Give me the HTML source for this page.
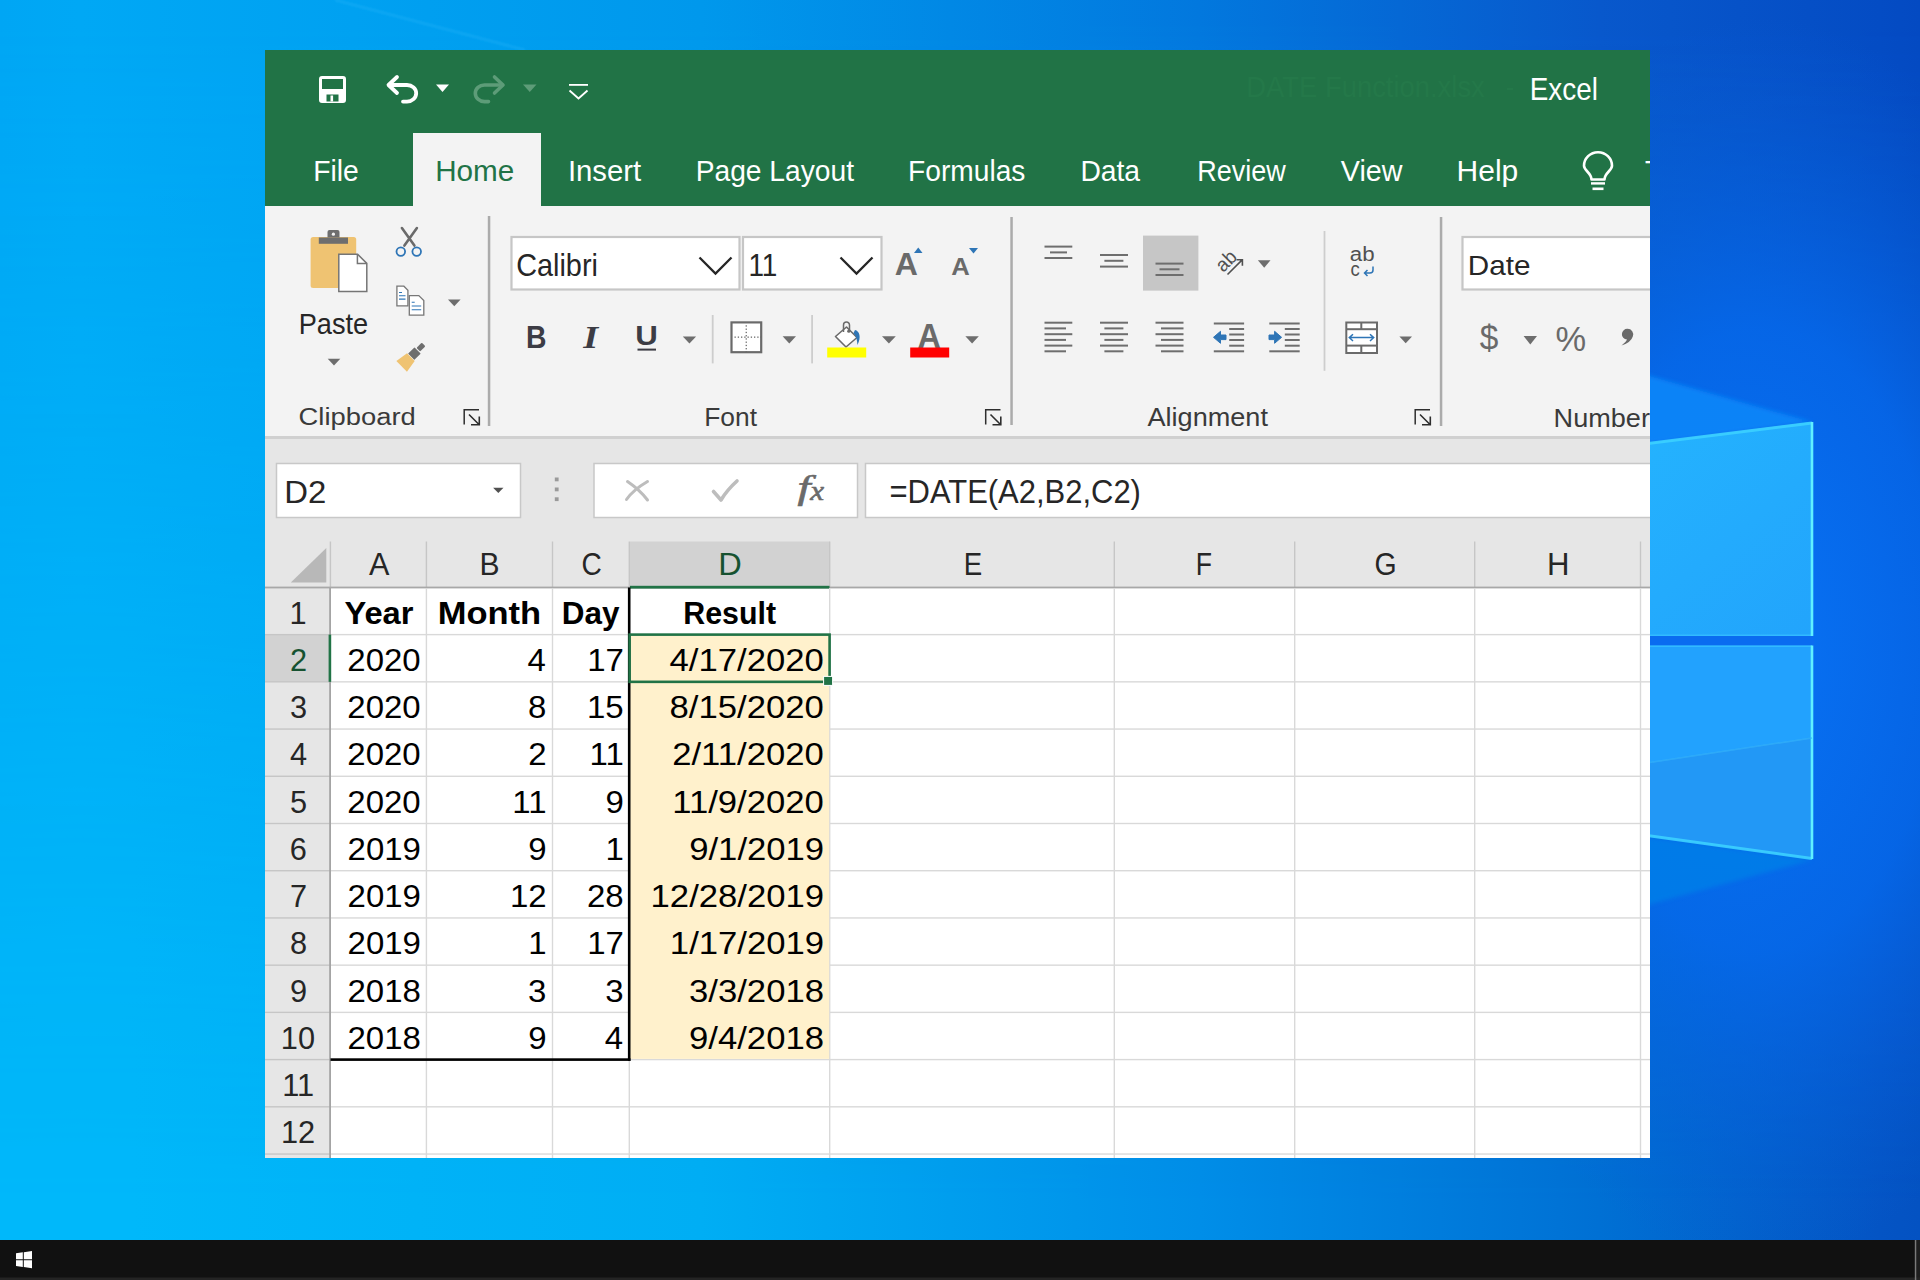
<!DOCTYPE html>
<html><head><meta charset="utf-8"><title>Excel DATE</title>
<style>
html,body{margin:0;padding:0;width:1920px;height:1280px;overflow:hidden;}
body{position:relative;font-family:"Liberation Sans", sans-serif;
 background:
  linear-gradient(100deg, #00a2ec 0%, #00a6f0 30%, #0096ea 50%, #0a78dc 68%, #0a5ed0 82%, #0a4cc0 100%);
}
#wall{position:absolute;left:0;top:0;width:1920px;height:1280px;}
#win{position:absolute;left:265px;top:50px;width:1385px;height:1108px;overflow:hidden;background:#fff;}
#taskbar{position:absolute;left:0;top:1240px;width:1920px;height:40px;background:#111111;}
svg{position:absolute;left:0;top:0;}
</style></head>
<body>
<svg id="wall" width="1920" height="1280" viewBox="0 0 1920 1280"><defs>
<linearGradient id="gBot" x1="0" y1="0" x2="1920" y2="0" gradientUnits="userSpaceOnUse">
 <stop offset="0" stop-color="#00b8fa"/><stop offset="0.068" stop-color="#00b8fa"/><stop offset="0.365" stop-color="#00aef4"/>
 <stop offset="0.625" stop-color="#008ee8"/><stop offset="0.833" stop-color="#0070d4"/><stop offset="0.979" stop-color="#0454c4"/><stop offset="1" stop-color="#0452c2"/>
</linearGradient>
<linearGradient id="gTop" x1="0" y1="0" x2="1920" y2="0" gradientUnits="userSpaceOnUse">
 <stop offset="0" stop-color="#00a6f4"/><stop offset="0.042" stop-color="#00a8f5"/><stop offset="0.365" stop-color="#0098ec"/>
 <stop offset="0.625" stop-color="#0278de"/><stop offset="0.833" stop-color="#0858cc"/><stop offset="0.979" stop-color="#044cc4"/><stop offset="1" stop-color="#044ac2"/>
</linearGradient>
<linearGradient id="fadeV" x1="0" y1="25" x2="0" y2="1200" gradientUnits="userSpaceOnUse">
 <stop offset="0" stop-color="#fff" stop-opacity="1"/><stop offset="1" stop-color="#fff" stop-opacity="0"/>
</linearGradient>
<mask id="mTop"><rect x="0" y="0" width="1920" height="1280" fill="url(#fadeV)"/></mask>
<radialGradient id="glow" cx="1760" cy="640" r="480" gradientUnits="userSpaceOnUse" gradientTransform="translate(1760 640) scale(0.75 1.3) translate(-1760 -640)">
 <stop offset="0" stop-color="#0872f4" stop-opacity="1"/><stop offset="0.5" stop-color="#066aee" stop-opacity="0.8"/><stop offset="1" stop-color="#0a60d8" stop-opacity="0"/>
</radialGradient>
<linearGradient id="paneT" x1="1650" y1="440" x2="1812" y2="635" gradientUnits="userSpaceOnUse">
 <stop offset="0" stop-color="#24b2fe"/><stop offset="1" stop-color="#22a4fc"/>
</linearGradient>
<linearGradient id="beamT" x1="1650" y1="0" x2="1812" y2="0" gradientUnits="userSpaceOnUse">
 <stop offset="0" stop-color="#1c86ec"/><stop offset="1" stop-color="#1a7ae8"/>
</linearGradient>
<filter id="blur1" x="-10%" y="-10%" width="120%" height="120%"><feGaussianBlur stdDeviation="1.2"/></filter>
<filter id="blur2" x="-10%" y="-30%" width="120%" height="160%"><feGaussianBlur stdDeviation="2.2"/></filter>
<filter id="blur3" x="-20%" y="-20%" width="140%" height="140%"><feGaussianBlur stdDeviation="3"/></filter>
</defs><rect x="0" y="0" width="1920" height="1280" fill="url(#gBot)"/><rect x="0" y="0" width="1920" height="1280" fill="url(#gTop)" mask="url(#mTop)"/><rect x="1300" y="0" width="620" height="1280" fill="url(#glow)"/><path d="M335,0 L525,50" stroke="#40c4ff" stroke-opacity="0.22" stroke-width="2.5" filter="url(#blur1)"/><polygon points="1812,422 1640,373 1640,445" fill="#0888fa" opacity="0.85" filter="url(#blur2)"/><polygon points="1812,860 1640,836 1640,907" fill="#067ee8" opacity="0.85" filter="url(#blur2)"/><rect x="1640" y="634" width="174" height="13" fill="#0a6cf0"/><polygon points="1640,444 1812,422 1812,636 1640,636" fill="url(#paneT)"/><polygon points="1640,645.5 1812,645.5 1812,738 1640,764" fill="#22a2fe"/><polygon points="1640,764 1812,738 1812,859 1640,835" fill="#2298f6"/><polyline points="1812,422 1812,636" fill="none" stroke="#6ae4ff" stroke-width="5" opacity="0.45" filter="url(#blur3)"/><polyline points="1812,645.5 1812,859" fill="none" stroke="#6ae4ff" stroke-width="5" opacity="0.45" filter="url(#blur3)"/><polyline points="1640,444.5 1812,423" fill="none" stroke="#3cd0ff" stroke-width="3" opacity="0.9"/><polyline points="1640,834.5 1812,858.5" fill="none" stroke="#3cd0ff" stroke-width="3" opacity="0.9"/><polyline points="1640,635.2 1812,635.2" fill="none" stroke="#34bcff" stroke-width="1.6" opacity="0.9"/><polyline points="1640,646.3 1812,646.3" fill="none" stroke="#34bcff" stroke-width="1.6" opacity="0.9"/><polyline points="1812,422 1812,636" fill="none" stroke="#60f0ff" stroke-width="2.6"/><polyline points="1812,645.5 1812,859" fill="none" stroke="#60f0ff" stroke-width="2.6"/><polyline points="1640,764 1812,738" fill="none" stroke="#36b4fa" stroke-width="1.5" opacity="0.7"/></svg>
<svg width="1920" height="1280" viewBox="0 0 1920 1280" style="position:absolute;left:0;top:0"><defs><clipPath id="wclip"><rect x="265" y="50" width="1385" height="1108"/></clipPath></defs><g clip-path="url(#wclip)"><rect x="265" y="50" width="1385" height="1108" fill="#e6e6e6"/><rect x="265" y="50" width="1385" height="156.5" fill="#217346"/><rect x="413" y="133" width="128" height="74" fill="#f3f3f3"/><rect x="265" y="206" width="1385" height="231" fill="#f3f3f3"/><rect x="265" y="436" width="1385" height="3" fill="#d0d0d0"/><rect x="330" y="587" width="1320" height="571" fill="#ffffff"/><rect x="265" y="588" width="65" height="570" fill="#e6e6e6"/></g><text x="1246.35" y="97.00" font-size="29.07" font-weight="normal" font-family='"Liberation Sans", sans-serif' fill="#247849" textLength="238.45" lengthAdjust="spacingAndGlyphs" >DATE Function.xlsx</text><rect x="1507" y="88" width="6" height="2" fill="#247849"/><text x="1529.71" y="100.00" font-size="31.11" font-weight="normal" font-family='"Liberation Sans", sans-serif' fill="#ffffff" textLength="68.16" lengthAdjust="spacingAndGlyphs" >Excel</text><text x="313.18" y="181.00" font-size="30.09" font-weight="normal" font-family='"Liberation Sans", sans-serif' fill="#ffffff" textLength="45.57" lengthAdjust="spacingAndGlyphs" >File</text><text x="435.17" y="181.00" font-size="30.09" font-weight="normal" font-family='"Liberation Sans", sans-serif' fill="#217346" textLength="79.15" lengthAdjust="spacingAndGlyphs" >Home</text><text x="567.90" y="181.00" font-size="30.09" font-weight="normal" font-family='"Liberation Sans", sans-serif' fill="#ffffff" textLength="73.30" lengthAdjust="spacingAndGlyphs" >Insert</text><text x="695.69" y="181.00" font-size="30.09" font-weight="normal" font-family='"Liberation Sans", sans-serif' fill="#ffffff" textLength="158.30" lengthAdjust="spacingAndGlyphs" >Page Layout</text><text x="908.09" y="181.00" font-size="30.09" font-weight="normal" font-family='"Liberation Sans", sans-serif' fill="#ffffff" textLength="117.31" lengthAdjust="spacingAndGlyphs" >Formulas</text><text x="1080.39" y="181.00" font-size="30.09" font-weight="normal" font-family='"Liberation Sans", sans-serif' fill="#ffffff" textLength="59.62" lengthAdjust="spacingAndGlyphs" >Data</text><text x="1197.19" y="181.00" font-size="30.09" font-weight="normal" font-family='"Liberation Sans", sans-serif' fill="#ffffff" textLength="88.56" lengthAdjust="spacingAndGlyphs" >Review</text><text x="1340.86" y="181.00" font-size="30.09" font-weight="normal" font-family='"Liberation Sans", sans-serif' fill="#ffffff" textLength="61.60" lengthAdjust="spacingAndGlyphs" >View</text><text x="1456.54" y="181.00" font-size="30.09" font-weight="normal" font-family='"Liberation Sans", sans-serif' fill="#ffffff" textLength="61.71" lengthAdjust="spacingAndGlyphs" >Help</text><g clip-path="url(#wclip)"><text x="1644.90" y="181.00" font-size="30.09" font-weight="normal" font-family='"Liberation Sans", sans-serif' fill="#ffffff" textLength="85.77" lengthAdjust="spacingAndGlyphs" >Tell me</text></g><text x="298.77" y="333.50" font-size="29.80" font-weight="normal" font-family='"Liberation Sans", sans-serif' fill="#262626" textLength="69.42" lengthAdjust="spacingAndGlyphs" >Paste</text><text x="298.60" y="425.00" font-size="24.42" font-weight="normal" font-family='"Liberation Sans", sans-serif' fill="#3a3a3a" textLength="117.16" lengthAdjust="spacingAndGlyphs" >Clipboard</text><text x="704.24" y="426.30" font-size="25.29" font-weight="normal" font-family='"Liberation Sans", sans-serif' fill="#3a3a3a" textLength="52.75" lengthAdjust="spacingAndGlyphs" >Font</text><text x="1147.45" y="425.80" font-size="25.00" font-weight="normal" font-family='"Liberation Sans", sans-serif' fill="#3a3a3a" textLength="120.54" lengthAdjust="spacingAndGlyphs" >Alignment</text><g clip-path="url(#wclip)"><text x="1553.58" y="426.50" font-size="25.29" font-weight="normal" font-family='"Liberation Sans", sans-serif' fill="#3a3a3a" textLength="96.37" lengthAdjust="spacingAndGlyphs" >Number</text></g><rect x="511.5" y="237" width="228" height="52.5" fill="#ffffff" stroke="#c6c6c6" stroke-width="2.2"/><rect x="743" y="237" width="138.5" height="52.5" fill="#ffffff" stroke="#c6c6c6" stroke-width="2.2"/><text x="516.13" y="276.00" font-size="31.54" font-weight="normal" font-family='"Liberation Sans", sans-serif' fill="#262626" textLength="81.81" lengthAdjust="spacingAndGlyphs" >Calibri</text><text x="748.38" y="276.00" font-size="31.54" font-weight="normal" font-family='"Liberation Sans", sans-serif' fill="#262626" textLength="28.99" lengthAdjust="spacingAndGlyphs" >11</text><polyline points="699.5,257.5 715.5,273.5 731.5,257.5" fill="none" stroke="#262626" stroke-width="2.3"/><polyline points="840.5,257.5 856.5,273.5 872.5,257.5" fill="none" stroke="#262626" stroke-width="2.3"/><g clip-path="url(#wclip)"><rect x="1462.5" y="237" width="250" height="52.5" fill="#ffffff" stroke="#c6c6c6" stroke-width="2.2"/></g><text x="1467.87" y="275.40" font-size="28.49" font-weight="normal" font-family='"Liberation Sans", sans-serif' fill="#262626" textLength="62.65" lengthAdjust="spacingAndGlyphs" >Date</text><rect x="487.8" y="216" width="2.5" height="210" fill="#ababab"/><rect x="1010.3" y="217" width="2.5" height="208" fill="#ababab"/><rect x="1439.8" y="217" width="2.5" height="209" fill="#ababab"/><rect x="711.8000000000001" y="315" width="1.8" height="48.39999999999998" fill="#cdcdcd"/><rect x="811.2" y="315" width="1.8" height="48.39999999999998" fill="#cdcdcd"/><rect x="1323.6000000000001" y="231" width="1.8" height="139.8" fill="#cdcdcd"/><rect x="276.5" y="463.5" width="244" height="54" fill="#ffffff" stroke="#c8c8c8" stroke-width="1.5"/><rect x="594" y="463.5" width="263.5" height="54" fill="#ffffff" stroke="#c8c8c8" stroke-width="1.5"/><g clip-path="url(#wclip)"><rect x="865.5" y="463.5" width="800" height="54" fill="#ffffff" stroke="#c8c8c8" stroke-width="1.5"/></g><text x="284.30" y="502.70" font-size="30.52" font-weight="normal" font-family='"Liberation Sans", sans-serif' fill="#262626" textLength="42.05" lengthAdjust="spacingAndGlyphs" >D2</text><text x="889.48" y="502.50" font-size="32.85" font-weight="normal" font-family='"Liberation Sans", sans-serif' fill="#262626" textLength="251.44" lengthAdjust="spacingAndGlyphs" >=DATE(A2,B2,C2)</text><rect x="630" y="541.5" width="199.5" height="46" fill="#d2d2d2"/><rect x="329.7" y="541.5" width="1.4" height="46" fill="#c6c6c6"/><rect x="425.7" y="541.5" width="1.4" height="46" fill="#c6c6c6"/><rect x="551.8" y="541.5" width="1.4" height="46" fill="#c6c6c6"/><rect x="628.6" y="541.5" width="1.4" height="46" fill="#c6c6c6"/><rect x="829.0" y="541.5" width="1.4" height="46" fill="#c6c6c6"/><rect x="1113.6000000000001" y="541.5" width="1.4" height="46" fill="#c6c6c6"/><rect x="1294.0" y="541.5" width="1.4" height="46" fill="#c6c6c6"/><rect x="1474.0" y="541.5" width="1.4" height="46" fill="#c6c6c6"/><rect x="1639.8000000000002" y="541.5" width="1.4" height="46" fill="#c6c6c6"/><polygon points="326.3,548 326.3,582.4 290.8,582.4" fill="#b8b8b8"/><rect x="265" y="586.6" width="1385" height="1.8" fill="#a8a8a8"/><rect x="630" y="585.8" width="199.5" height="2.8" fill="#217346"/><text x="368.94" y="575.30" font-size="30.52" font-weight="normal" font-family='"Liberation Sans", sans-serif' fill="#262626" textLength="20.42" lengthAdjust="spacingAndGlyphs" >A</text><text x="479.53" y="575.30" font-size="30.52" font-weight="normal" font-family='"Liberation Sans", sans-serif' fill="#262626" textLength="20.06" lengthAdjust="spacingAndGlyphs" >B</text><text x="581.57" y="575.30" font-size="30.52" font-weight="normal" font-family='"Liberation Sans", sans-serif' fill="#262626" textLength="20.31" lengthAdjust="spacingAndGlyphs" >C</text><text x="718.33" y="575.30" font-size="30.52" font-weight="normal" font-family='"Liberation Sans", sans-serif' fill="#165230" textLength="23.54" lengthAdjust="spacingAndGlyphs" >D</text><text x="963.73" y="575.30" font-size="30.52" font-weight="normal" font-family='"Liberation Sans", sans-serif' fill="#262626" textLength="18.46" lengthAdjust="spacingAndGlyphs" >E</text><text x="1195.82" y="575.30" font-size="30.52" font-weight="normal" font-family='"Liberation Sans", sans-serif' fill="#262626" textLength="16.24" lengthAdjust="spacingAndGlyphs" >F</text><text x="1374.58" y="575.30" font-size="30.52" font-weight="normal" font-family='"Liberation Sans", sans-serif' fill="#262626" textLength="22.16" lengthAdjust="spacingAndGlyphs" >G</text><text x="1547.05" y="575.30" font-size="30.52" font-weight="normal" font-family='"Liberation Sans", sans-serif' fill="#262626" textLength="22.48" lengthAdjust="spacingAndGlyphs" >H</text><g clip-path="url(#wclip)"><rect x="265" y="634.62" width="65" height="47.22" fill="#d2d2d2"/><rect x="330" y="633.92" width="1320" height="1.4" fill="#d9d9d9"/><rect x="265" y="633.92" width="65" height="1.4" fill="#c6c6c6"/><rect x="330" y="681.14" width="1320" height="1.4" fill="#d9d9d9"/><rect x="265" y="681.14" width="65" height="1.4" fill="#c6c6c6"/><rect x="330" y="728.36" width="1320" height="1.4" fill="#d9d9d9"/><rect x="265" y="728.36" width="65" height="1.4" fill="#c6c6c6"/><rect x="330" y="775.58" width="1320" height="1.4" fill="#d9d9d9"/><rect x="265" y="775.58" width="65" height="1.4" fill="#c6c6c6"/><rect x="330" y="822.80" width="1320" height="1.4" fill="#d9d9d9"/><rect x="265" y="822.80" width="65" height="1.4" fill="#c6c6c6"/><rect x="330" y="870.02" width="1320" height="1.4" fill="#d9d9d9"/><rect x="265" y="870.02" width="65" height="1.4" fill="#c6c6c6"/><rect x="330" y="917.24" width="1320" height="1.4" fill="#d9d9d9"/><rect x="265" y="917.24" width="65" height="1.4" fill="#c6c6c6"/><rect x="330" y="964.46" width="1320" height="1.4" fill="#d9d9d9"/><rect x="265" y="964.46" width="65" height="1.4" fill="#c6c6c6"/><rect x="330" y="1011.68" width="1320" height="1.4" fill="#d9d9d9"/><rect x="265" y="1011.68" width="65" height="1.4" fill="#c6c6c6"/><rect x="330" y="1058.90" width="1320" height="1.4" fill="#d9d9d9"/><rect x="265" y="1058.90" width="65" height="1.4" fill="#c6c6c6"/><rect x="330" y="1106.12" width="1320" height="1.4" fill="#d9d9d9"/><rect x="265" y="1106.12" width="65" height="1.4" fill="#c6c6c6"/><rect x="330" y="1153.34" width="1320" height="1.4" fill="#d9d9d9"/><rect x="265" y="1153.34" width="65" height="1.4" fill="#c6c6c6"/><rect x="425.70" y="588" width="1.4" height="570" fill="#d9d9d9"/><rect x="551.80" y="588" width="1.4" height="570" fill="#d9d9d9"/><rect x="628.60" y="588" width="1.4" height="570" fill="#d9d9d9"/><rect x="829.00" y="588" width="1.4" height="570" fill="#d9d9d9"/><rect x="1113.60" y="588" width="1.4" height="570" fill="#d9d9d9"/><rect x="1294.00" y="588" width="1.4" height="570" fill="#d9d9d9"/><rect x="1474.00" y="588" width="1.4" height="570" fill="#d9d9d9"/><rect x="1639.80" y="588" width="1.4" height="570" fill="#d9d9d9"/><rect x="630" y="635.32" width="199.2" height="423.58" fill="#fff1cc"/><rect x="329.2" y="588" width="1.8" height="570" fill="#a4a4a4"/><rect x="328.6" y="634.62" width="2.6" height="47.22" fill="#217346"/></g><rect x="627.9" y="587.5" width="2.6" height="473.40" fill="#000"/><rect x="330.5" y="1058.30" width="300" height="2.6" fill="#000"/><rect x="629.6" y="634.62" width="200" height="47.22" fill="none" stroke="#217346" stroke-width="2.6"/><rect x="823.6" y="676.4" width="9" height="9" fill="#217346" stroke="#ffffff" stroke-width="1"/><text x="289.54" y="623.82" font-size="31.54" font-weight="normal" font-family='"Liberation Sans", sans-serif' fill="#262626" textLength="17.10" lengthAdjust="spacingAndGlyphs" >1</text><text x="289.95" y="671.04" font-size="31.54" font-weight="normal" font-family='"Liberation Sans", sans-serif' fill="#165230" textLength="17.10" lengthAdjust="spacingAndGlyphs" >2</text><text x="290.05" y="718.26" font-size="31.54" font-weight="normal" font-family='"Liberation Sans", sans-serif' fill="#262626" textLength="17.10" lengthAdjust="spacingAndGlyphs" >3</text><text x="290.05" y="765.48" font-size="31.54" font-weight="normal" font-family='"Liberation Sans", sans-serif' fill="#262626" textLength="17.10" lengthAdjust="spacingAndGlyphs" >4</text><text x="289.98" y="812.70" font-size="31.54" font-weight="normal" font-family='"Liberation Sans", sans-serif' fill="#262626" textLength="17.10" lengthAdjust="spacingAndGlyphs" >5</text><text x="289.85" y="859.92" font-size="31.54" font-weight="normal" font-family='"Liberation Sans", sans-serif' fill="#262626" textLength="17.10" lengthAdjust="spacingAndGlyphs" >6</text><text x="289.94" y="907.14" font-size="31.54" font-weight="normal" font-family='"Liberation Sans", sans-serif' fill="#262626" textLength="17.10" lengthAdjust="spacingAndGlyphs" >7</text><text x="289.95" y="954.36" font-size="31.54" font-weight="normal" font-family='"Liberation Sans", sans-serif' fill="#262626" textLength="17.10" lengthAdjust="spacingAndGlyphs" >8</text><text x="289.95" y="1001.58" font-size="31.54" font-weight="normal" font-family='"Liberation Sans", sans-serif' fill="#262626" textLength="17.10" lengthAdjust="spacingAndGlyphs" >9</text><text x="280.84" y="1048.80" font-size="31.54" font-weight="normal" font-family='"Liberation Sans", sans-serif' fill="#262626" textLength="34.19" lengthAdjust="spacingAndGlyphs" >10</text><text x="282.13" y="1096.02" font-size="31.54" font-weight="normal" font-family='"Liberation Sans", sans-serif' fill="#262626" textLength="31.91" lengthAdjust="spacingAndGlyphs" >11</text><text x="281.01" y="1143.24" font-size="31.54" font-weight="normal" font-family='"Liberation Sans", sans-serif' fill="#262626" textLength="34.19" lengthAdjust="spacingAndGlyphs" >12</text><text x="344.44" y="623.82" font-size="31.54" font-weight="bold" font-family='"Liberation Sans", sans-serif' fill="#000" textLength="69.06" lengthAdjust="spacingAndGlyphs" >Year</text><text x="437.69" y="623.82" font-size="31.54" font-weight="bold" font-family='"Liberation Sans", sans-serif' fill="#000" textLength="103.43" lengthAdjust="spacingAndGlyphs" >Month</text><text x="561.69" y="623.82" font-size="31.54" font-weight="bold" font-family='"Liberation Sans", sans-serif' fill="#000" textLength="57.68" lengthAdjust="spacingAndGlyphs" >Day</text><text x="683.27" y="623.82" font-size="31.54" font-weight="bold" font-family='"Liberation Sans", sans-serif' fill="#000" textLength="92.80" lengthAdjust="spacingAndGlyphs" >Result</text><text x="347.35" y="671.04" font-size="31.54" font-weight="normal" font-family='"Liberation Sans", sans-serif' fill="#000" textLength="73.36" lengthAdjust="spacingAndGlyphs" >2020</text><text x="527.62" y="671.04" font-size="31.54" font-weight="normal" font-family='"Liberation Sans", sans-serif' fill="#000" textLength="18.34" lengthAdjust="spacingAndGlyphs" >4</text><text x="587.18" y="671.04" font-size="31.54" font-weight="normal" font-family='"Liberation Sans", sans-serif' fill="#000" textLength="36.68" lengthAdjust="spacingAndGlyphs" >17</text><text x="669.60" y="671.04" font-size="31.54" font-weight="normal" font-family='"Liberation Sans", sans-serif' fill="#000" textLength="154.24" lengthAdjust="spacingAndGlyphs" >4/17/2020</text><text x="347.35" y="718.26" font-size="31.54" font-weight="normal" font-family='"Liberation Sans", sans-serif' fill="#000" textLength="73.36" lengthAdjust="spacingAndGlyphs" >2020</text><text x="528.08" y="718.26" font-size="31.54" font-weight="normal" font-family='"Liberation Sans", sans-serif' fill="#000" textLength="18.34" lengthAdjust="spacingAndGlyphs" >8</text><text x="586.92" y="718.26" font-size="31.54" font-weight="normal" font-family='"Liberation Sans", sans-serif' fill="#000" textLength="36.68" lengthAdjust="spacingAndGlyphs" >15</text><text x="669.60" y="718.26" font-size="31.54" font-weight="normal" font-family='"Liberation Sans", sans-serif' fill="#000" textLength="154.24" lengthAdjust="spacingAndGlyphs" >8/15/2020</text><text x="347.35" y="765.48" font-size="31.54" font-weight="normal" font-family='"Liberation Sans", sans-serif' fill="#000" textLength="73.36" lengthAdjust="spacingAndGlyphs" >2020</text><text x="528.32" y="765.48" font-size="31.54" font-weight="normal" font-family='"Liberation Sans", sans-serif' fill="#000" textLength="18.34" lengthAdjust="spacingAndGlyphs" >2</text><text x="589.59" y="765.48" font-size="31.54" font-weight="normal" font-family='"Liberation Sans", sans-serif' fill="#000" textLength="34.23" lengthAdjust="spacingAndGlyphs" >11</text><text x="672.20" y="765.48" font-size="31.54" font-weight="normal" font-family='"Liberation Sans", sans-serif' fill="#000" textLength="151.67" lengthAdjust="spacingAndGlyphs" >2/11/2020</text><text x="347.35" y="812.70" font-size="31.54" font-weight="normal" font-family='"Liberation Sans", sans-serif' fill="#000" textLength="73.36" lengthAdjust="spacingAndGlyphs" >2020</text><text x="512.39" y="812.70" font-size="31.54" font-weight="normal" font-family='"Liberation Sans", sans-serif' fill="#000" textLength="34.23" lengthAdjust="spacingAndGlyphs" >11</text><text x="605.42" y="812.70" font-size="31.54" font-weight="normal" font-family='"Liberation Sans", sans-serif' fill="#000" textLength="18.34" lengthAdjust="spacingAndGlyphs" >9</text><text x="672.20" y="812.70" font-size="31.54" font-weight="normal" font-family='"Liberation Sans", sans-serif' fill="#000" textLength="151.67" lengthAdjust="spacingAndGlyphs" >11/9/2020</text><text x="347.62" y="859.92" font-size="31.54" font-weight="normal" font-family='"Liberation Sans", sans-serif' fill="#000" textLength="73.36" lengthAdjust="spacingAndGlyphs" >2019</text><text x="528.22" y="859.92" font-size="31.54" font-weight="normal" font-family='"Liberation Sans", sans-serif' fill="#000" textLength="18.34" lengthAdjust="spacingAndGlyphs" >9</text><text x="605.48" y="859.92" font-size="31.54" font-weight="normal" font-family='"Liberation Sans", sans-serif' fill="#000" textLength="18.34" lengthAdjust="spacingAndGlyphs" >1</text><text x="689.19" y="859.92" font-size="31.54" font-weight="normal" font-family='"Liberation Sans", sans-serif' fill="#000" textLength="134.96" lengthAdjust="spacingAndGlyphs" >9/1/2019</text><text x="347.62" y="907.14" font-size="31.54" font-weight="normal" font-family='"Liberation Sans", sans-serif' fill="#000" textLength="73.36" lengthAdjust="spacingAndGlyphs" >2019</text><text x="509.98" y="907.14" font-size="31.54" font-weight="normal" font-family='"Liberation Sans", sans-serif' fill="#000" textLength="36.68" lengthAdjust="spacingAndGlyphs" >12</text><text x="586.95" y="907.14" font-size="31.54" font-weight="normal" font-family='"Liberation Sans", sans-serif' fill="#000" textLength="36.68" lengthAdjust="spacingAndGlyphs" >28</text><text x="650.60" y="907.14" font-size="31.54" font-weight="normal" font-family='"Liberation Sans", sans-serif' fill="#000" textLength="173.52" lengthAdjust="spacingAndGlyphs" >12/28/2019</text><text x="347.62" y="954.36" font-size="31.54" font-weight="normal" font-family='"Liberation Sans", sans-serif' fill="#000" textLength="73.36" lengthAdjust="spacingAndGlyphs" >2019</text><text x="528.28" y="954.36" font-size="31.54" font-weight="normal" font-family='"Liberation Sans", sans-serif' fill="#000" textLength="18.34" lengthAdjust="spacingAndGlyphs" >1</text><text x="587.18" y="954.36" font-size="31.54" font-weight="normal" font-family='"Liberation Sans", sans-serif' fill="#000" textLength="36.68" lengthAdjust="spacingAndGlyphs" >17</text><text x="669.88" y="954.36" font-size="31.54" font-weight="normal" font-family='"Liberation Sans", sans-serif' fill="#000" textLength="154.24" lengthAdjust="spacingAndGlyphs" >1/17/2019</text><text x="347.48" y="1001.58" font-size="31.54" font-weight="normal" font-family='"Liberation Sans", sans-serif' fill="#000" textLength="73.36" lengthAdjust="spacingAndGlyphs" >2018</text><text x="528.12" y="1001.58" font-size="31.54" font-weight="normal" font-family='"Liberation Sans", sans-serif' fill="#000" textLength="18.34" lengthAdjust="spacingAndGlyphs" >3</text><text x="605.32" y="1001.58" font-size="31.54" font-weight="normal" font-family='"Liberation Sans", sans-serif' fill="#000" textLength="18.34" lengthAdjust="spacingAndGlyphs" >3</text><text x="689.05" y="1001.58" font-size="31.54" font-weight="normal" font-family='"Liberation Sans", sans-serif' fill="#000" textLength="134.96" lengthAdjust="spacingAndGlyphs" >3/3/2018</text><text x="347.48" y="1048.80" font-size="31.54" font-weight="normal" font-family='"Liberation Sans", sans-serif' fill="#000" textLength="73.36" lengthAdjust="spacingAndGlyphs" >2018</text><text x="528.22" y="1048.80" font-size="31.54" font-weight="normal" font-family='"Liberation Sans", sans-serif' fill="#000" textLength="18.34" lengthAdjust="spacingAndGlyphs" >9</text><text x="604.82" y="1048.80" font-size="31.54" font-weight="normal" font-family='"Liberation Sans", sans-serif' fill="#000" textLength="18.34" lengthAdjust="spacingAndGlyphs" >4</text><text x="689.05" y="1048.80" font-size="31.54" font-weight="normal" font-family='"Liberation Sans", sans-serif' fill="#000" textLength="134.96" lengthAdjust="spacingAndGlyphs" >9/4/2018</text><path d="M319.5,77.5 h22.5 l4,4 v21 h-26.5 z" fill="none" stroke="#fff" stroke-width="0"/><rect x="320.5" y="77.5" width="24" height="24" rx="1.5" fill="none" stroke="#fff" stroke-width="3"/><rect x="320" y="89" width="25" height="13" fill="#fff"/><rect x="326.5" y="94.5" width="12" height="7" fill="#217346"/><rect x="330.5" y="95.5" width="2.6" height="6" fill="#fff"/><path d="M389.5,85 H407 A9.2,8.3 0 0 1 407,101.6 H403" fill="none" stroke="#fff" stroke-width="3.8" stroke-linecap="round"/><polyline points="397,77 388.5,85 397,93" fill="none" stroke="#fff" stroke-width="3.8" stroke-linecap="round" stroke-linejoin="round"/><polygon points="436,84.5 449,84.5 442.5,92" fill="#ffffff"/><path d="M502,85 H484.5 A9.2,8.3 0 0 0 484.5,101.6 H488.5" fill="none" stroke="#5d9c78" stroke-width="3.6" stroke-linecap="round"/><polyline points="494.5,77 503,85 494.5,93" fill="none" stroke="#5d9c78" stroke-width="3.6" stroke-linecap="round" stroke-linejoin="round"/><polygon points="523,84.5 536.5,84.5 529.75,92" fill="#5d9c78"/><rect x="569" y="84" width="19" height="1.8" fill="#fff"/><polyline points="569.5,90.5 578.5,98.5 587.5,90.5" fill="none" stroke="#fff" stroke-width="1.8"/><path d="M1591.5,179.5 C1591.5,173 1584,170.5 1584,165.8 A14,13.6 0 0 1 1612,165.8 C1612,170.5 1604.5,173 1604.5,179.5 Z" fill="none" stroke="#fff" stroke-width="2.6" stroke-linejoin="round"/><rect x="1591" y="182.2" width="14" height="2.4" fill="#fff"/><rect x="1592.5" y="187.5" width="11" height="2.6" fill="#fff"/><rect x="310.6" y="237" width="45.6" height="51" rx="2.5" fill="#efc372"/><path d="M318.8,237.5 h29.2 v6.3 h-29.2 z" fill="#6e6e6e"/><path d="M327.5,237.6 v-5.6 a2,2 0 0 1 2,-2 h8 a2,2 0 0 1 2,2 v5.6 z" fill="#6e6e6e"/><circle cx="333.4" cy="234.2" r="1.6" fill="#f3f3f3"/><path d="M338.8,254.2 h18.8 l9.2,9.2 v28.2 h-28 z" fill="#fff" stroke="#757575" stroke-width="1.5"/><path d="M357.4,254.2 v9.4 h9.4" fill="none" stroke="#757575" stroke-width="1.5"/><polygon points="327.7,358.8 340.3,358.8 334.0,365.6" fill="#6d6d6d"/><path d="M401.9,228 L414.4,245.6 M416.9,228 L404.4,245.6" stroke="#6a6a6a" stroke-width="2.6" stroke-linecap="round"/><circle cx="400.8" cy="251.6" r="4.3" fill="none" stroke="#2e75b6" stroke-width="1.8"/><circle cx="416.7" cy="251.6" r="4.3" fill="none" stroke="#2e75b6" stroke-width="1.8"/><path d="M396.9,286.2 h7 l4,4 v15.6 h-11 z" fill="#fff" stroke="#777" stroke-width="1.3"/><path d="M399,292.5 h3 M399,295.8 h6.5 M399,299.1 h6.5" stroke="#2e75b6" stroke-width="1.1"/><path d="M409.3,295.6 h9.5 l5,5 v14.6 h-14.5 z" fill="#fff" stroke="#777" stroke-width="1.3"/><path d="M411.7,302.3 h3 M411.7,306 h9.5 M411.7,309.8 h9.5" stroke="#2e75b6" stroke-width="1.1"/><polygon points="448,299.5 460.6,299.5 454.3,306.2" fill="#6d6d6d"/><g transform="translate(410.5,357.5) rotate(-45)"><rect x="11" y="-2.6" width="7.5" height="5.2" rx="1" fill="#6e6e6e"/><rect x="1" y="-4.4" width="9" height="8.8" rx="0.5" fill="#6e6e6e"/><path d="M0.5,-5.4 L0.5,5.4 L-12.5,7.5 L-12.5,-7.5 Z" fill="#efc372"/></g><path d="M464.2,424.5 V409.7 H479.0" fill="none" stroke="#2e2e2e" stroke-width="1.5"/><path d="M469.0,414.5 L479.0,424.5 M479.3,416.5 V424.8 H471.0" fill="none" stroke="#2e2e2e" stroke-width="1.6"/><path d="M985.7,424.5 V409.7 H1000.5" fill="none" stroke="#2e2e2e" stroke-width="1.5"/><path d="M990.5,414.5 L1000.5,424.5 M1000.8,416.5 V424.8 H992.5" fill="none" stroke="#2e2e2e" stroke-width="1.6"/><path d="M1415.2,424.5 V409.7 H1430.0" fill="none" stroke="#2e2e2e" stroke-width="1.5"/><path d="M1420.0,414.5 L1430.0,424.5 M1430.3,416.5 V424.8 H1422.0" fill="none" stroke="#2e2e2e" stroke-width="1.6"/><text x="894.70" y="275.00" font-size="31.98" font-weight="bold" font-family='"Liberation Sans", sans-serif' fill="#6a6a6a" textLength="23.14" lengthAdjust="spacingAndGlyphs" >A</text><polygon points="914,253 922.5,253 918.25,247.5" fill="#2e75b6"/><text x="951.16" y="275.00" font-size="24.71" font-weight="bold" font-family='"Liberation Sans", sans-serif' fill="#6a6a6a" textLength="18.51" lengthAdjust="spacingAndGlyphs" >A</text><polygon points="969,248 978,248 973.5,253.5" fill="#2e75b6"/><text x="525.90" y="347.70" font-size="32.27" font-weight="bold" font-family='"Liberation Sans", sans-serif' fill="#3c3c44" textLength="20.48" lengthAdjust="spacingAndGlyphs" >B</text><text x="583.18" y="347.70" font-size="32.27" font-weight="bold" font-style="italic" font-family='"Liberation Serif", serif' fill="#3c3c44" textLength="14.86" lengthAdjust="spacingAndGlyphs" >I</text><text x="635.32" y="344.50" font-size="27.62" font-weight="bold" font-family='"Liberation Sans", sans-serif' fill="#3c3c44" textLength="22.59" lengthAdjust="spacingAndGlyphs" >U</text><rect x="637.5" y="348.6" width="18.5" height="2" fill="#3c3c44"/><polygon points="682.8,336.4 696.1,336.4 689.45,343.6" fill="#6d6d6d"/><rect x="731.5" y="322.4" width="29.7" height="29.8" fill="#fff" stroke="#6a6a6a" stroke-width="2.2"/><rect x="734.50" y="336.5" width="1.3" height="1.3" fill="#6a6a6a"/><rect x="745.6" y="325.30" width="1.3" height="1.3" fill="#6a6a6a"/><rect x="737.75" y="336.5" width="1.3" height="1.3" fill="#6a6a6a"/><rect x="745.6" y="328.55" width="1.3" height="1.3" fill="#6a6a6a"/><rect x="741.00" y="336.5" width="1.3" height="1.3" fill="#6a6a6a"/><rect x="745.6" y="331.80" width="1.3" height="1.3" fill="#6a6a6a"/><rect x="744.25" y="336.5" width="1.3" height="1.3" fill="#6a6a6a"/><rect x="745.6" y="335.05" width="1.3" height="1.3" fill="#6a6a6a"/><rect x="747.50" y="336.5" width="1.3" height="1.3" fill="#6a6a6a"/><rect x="745.6" y="338.30" width="1.3" height="1.3" fill="#6a6a6a"/><rect x="750.75" y="336.5" width="1.3" height="1.3" fill="#6a6a6a"/><rect x="745.6" y="341.55" width="1.3" height="1.3" fill="#6a6a6a"/><rect x="754.00" y="336.5" width="1.3" height="1.3" fill="#6a6a6a"/><rect x="745.6" y="344.80" width="1.3" height="1.3" fill="#6a6a6a"/><rect x="757.25" y="336.5" width="1.3" height="1.3" fill="#6a6a6a"/><rect x="745.6" y="348.05" width="1.3" height="1.3" fill="#6a6a6a"/><rect x="760.50" y="336.5" width="1.3" height="1.3" fill="#6a6a6a"/><rect x="745.6" y="351.30" width="1.3" height="1.3" fill="#6a6a6a"/><polygon points="782.6,336.3 796,336.3 789.3,343.6" fill="#6d6d6d"/><path d="M846.5,327 L857,337.5 L846,347 L835.5,336.5 Z" fill="#fff" stroke="#6a6a6a" stroke-width="1.6" stroke-linejoin="round"/><path d="M843.5,332 V325 A3,3 0 0 1 849.5,325 V330" fill="none" stroke="#6a6a6a" stroke-width="1.5"/><circle cx="848.8" cy="331.2" r="1.6" fill="#6a6a6a"/><path d="M855,330 C859.5,331 861.5,337 857.5,345 C857,340 856.5,336 853.5,333 Z" fill="#2e75b6"/><rect x="827.2" y="347.5" width="39" height="10" fill="#ffff00"/><polygon points="882,336.3 895.8,336.3 888.9,343.6" fill="#6d6d6d"/><text x="917.49" y="347.80" font-size="34.30" font-weight="bold" font-family='"Liberation Sans", sans-serif' fill="#6a6a6a" textLength="23.46" lengthAdjust="spacingAndGlyphs" >A</text><rect x="910.2" y="347.5" width="39" height="10" fill="#ff0000"/><polygon points="965.4,336.3 978.8,336.3 972.0999999999999,343.6" fill="#6d6d6d"/><rect x="1044.50" y="245.60" width="27.80" height="2" fill="#6e6e6e"/><rect x="1050.00" y="251.40" width="17.00" height="2" fill="#6e6e6e"/><rect x="1044.50" y="257.00" width="27.80" height="2" fill="#6e6e6e"/><rect x="1100.00" y="254.00" width="28.00" height="2" fill="#6e6e6e"/><rect x="1104.40" y="259.80" width="19.00" height="2" fill="#6e6e6e"/><rect x="1100.00" y="265.60" width="28.00" height="2" fill="#6e6e6e"/><rect x="1143" y="235.6" width="55.4" height="55" fill="#c6c6c6"/><rect x="1155.50" y="262.60" width="28.00" height="2" fill="#6e6e6e"/><rect x="1159.50" y="268.30" width="20.00" height="2" fill="#6e6e6e"/><rect x="1155.50" y="274.00" width="28.00" height="2" fill="#6e6e6e"/><rect x="1044.50" y="321.70" width="27.80" height="2" fill="#6e6e6e"/><rect x="1044.50" y="327.40" width="21.50" height="2" fill="#6e6e6e"/><rect x="1044.50" y="333.20" width="27.80" height="2" fill="#6e6e6e"/><rect x="1044.50" y="338.90" width="21.50" height="2" fill="#6e6e6e"/><rect x="1044.50" y="344.60" width="27.80" height="2" fill="#6e6e6e"/><rect x="1044.50" y="350.30" width="21.50" height="2" fill="#6e6e6e"/><rect x="1100.00" y="321.70" width="28.00" height="2" fill="#6e6e6e"/><rect x="1104.40" y="327.40" width="19.00" height="2" fill="#6e6e6e"/><rect x="1100.00" y="333.20" width="28.00" height="2" fill="#6e6e6e"/><rect x="1104.40" y="338.90" width="19.00" height="2" fill="#6e6e6e"/><rect x="1100.00" y="344.60" width="28.00" height="2" fill="#6e6e6e"/><rect x="1104.40" y="350.30" width="19.00" height="2" fill="#6e6e6e"/><rect x="1155.50" y="321.70" width="28.00" height="2" fill="#6e6e6e"/><rect x="1161.00" y="327.40" width="22.50" height="2" fill="#6e6e6e"/><rect x="1155.50" y="333.20" width="28.00" height="2" fill="#6e6e6e"/><rect x="1161.00" y="338.90" width="22.50" height="2" fill="#6e6e6e"/><rect x="1155.50" y="344.60" width="28.00" height="2" fill="#6e6e6e"/><rect x="1161.00" y="350.30" width="22.50" height="2" fill="#6e6e6e"/><rect x="1213.80" y="322.50" width="30.30" height="2" fill="#6e6e6e"/><rect x="1229.20" y="328.00" width="14.90" height="2" fill="#6e6e6e"/><rect x="1229.20" y="333.50" width="14.90" height="2" fill="#6e6e6e"/><rect x="1229.20" y="339.00" width="14.90" height="2" fill="#6e6e6e"/><rect x="1229.20" y="344.70" width="14.90" height="2" fill="#6e6e6e"/><rect x="1213.80" y="350.30" width="30.30" height="2" fill="#6e6e6e"/><path d="M1213.5,337.3 L1220.5,331.3 V335 H1226 V339.6 H1220.5 V343.3 Z" fill="#2e75b6" stroke="#2e75b6" stroke-width="1" stroke-linejoin="round"/><rect x="1269.30" y="322.50" width="30.40" height="2" fill="#6e6e6e"/><rect x="1284.80" y="328.00" width="14.90" height="2" fill="#6e6e6e"/><rect x="1284.80" y="333.50" width="14.90" height="2" fill="#6e6e6e"/><rect x="1284.80" y="339.00" width="14.90" height="2" fill="#6e6e6e"/><rect x="1284.80" y="344.70" width="14.90" height="2" fill="#6e6e6e"/><rect x="1269.30" y="350.30" width="30.40" height="2" fill="#6e6e6e"/><path d="M1281.6,337.3 L1274.6,331.3 V335 H1269 V339.6 H1274.6 V343.3 Z" fill="#2e75b6" stroke="#2e75b6" stroke-width="1" stroke-linejoin="round"/><g transform="translate(1226,261) rotate(-45)"><text x="-10.30" y="6.50" font-size="19.62" font-weight="normal" font-family='"Liberation Sans", sans-serif' fill="#505050" textLength="21.10" lengthAdjust="spacingAndGlyphs" >ab</text></g><path d="M1227.5,274.5 L1242.4,259.6 M1236.5,259.8 H1242.4 V265.7" fill="none" stroke="#505050" stroke-width="1.6"/><polygon points="1257.9,260.2 1270.5,260.2 1264.2,267.7" fill="#6d6d6d"/><text x="1349.76" y="261.40" font-size="19.91" font-weight="normal" font-family='"Liberation Sans", sans-serif' fill="#505050" textLength="24.78" lengthAdjust="spacingAndGlyphs" >ab</text><text x="1350.52" y="275.70" font-size="19.48" font-weight="normal" font-family='"Liberation Sans", sans-serif' fill="#505050" textLength="9.26" lengthAdjust="spacingAndGlyphs" >c</text><path d="M1373,266.5 V270 A3,3 0 0 1 1370,273 H1364.5 M1367.5,270 L1364.5,273 L1367.5,276" fill="none" stroke="#2e75b6" stroke-width="1.5"/><rect x="1346.3" y="322.5" width="30.7" height="30.5" fill="#fff" stroke="#6a6a6a" stroke-width="2"/><rect x="1346.3" y="328.2" width="30.7" height="2" fill="#6a6a6a"/><rect x="1346.3" y="344.6" width="30.7" height="2" fill="#6a6a6a"/><rect x="1360.3" y="322.5" width="2" height="6.5" fill="#6a6a6a"/><rect x="1360.3" y="345" width="2" height="8" fill="#6a6a6a"/><path d="M1349.5,337.6 H1373.5 M1353,334.2 L1349.3,337.6 L1353,341 M1370,334.2 L1373.7,337.6 L1370,341" fill="none" stroke="#2e75b6" stroke-width="1.5"/><polygon points="1399.4,336.4 1412,336.4 1405.7,343.3" fill="#6d6d6d"/><text x="1479.63" y="350.00" font-size="34.88" font-weight="normal" font-family='"Liberation Sans", sans-serif' fill="#6a6a6a" textLength="18.61" lengthAdjust="spacingAndGlyphs" >$</text><polygon points="1523.6,336 1537,336 1530.3,344.4" fill="#6d6d6d"/><text x="1555.56" y="350.50" font-size="35.90" font-weight="normal" font-family='"Liberation Sans", sans-serif' fill="#6a6a6a" textLength="30.65" lengthAdjust="spacingAndGlyphs" >%</text><path d="M1627.6,328.8 A5.6,5.6 0 0 1 1632.8,336.5 Q1631,342.5 1621.5,345.5 Q1626.5,341.5 1627,339.6 A5.4,5.4 0 0 1 1627.6,328.8 Z" fill="#6a6a6a"/><polygon points="493.1,487.7 503.5,487.7 498.3,493" fill="#505050"/><rect x="554.8" y="477.5" width="3.8" height="3.8" fill="#9a9a9a"/><rect x="554.8" y="487.5" width="3.8" height="3.8" fill="#9a9a9a"/><rect x="554.8" y="497.3" width="3.8" height="3.8" fill="#9a9a9a"/><path d="M626.5,499.5 Q633,490 647.5,481.5 M627.5,481.5 Q640,490 647.5,500" fill="none" stroke="#bdbdbd" stroke-width="3" stroke-linecap="round"/><path d="M713.5,491.5 L721,500 Q727,490 737,481" fill="none" stroke="#bdbdbd" stroke-width="3.6" stroke-linecap="round" stroke-linejoin="round"/><text x="797.48" y="498.50" font-size="32.70" font-weight="normal" font-style="italic" font-family='"Liberation Serif", serif' fill="#6a6a6a" textLength="13.09" lengthAdjust="spacingAndGlyphs" stroke="#6a6a6a" stroke-width="0.6">f</text><text x="810.37" y="500.00" font-size="27.18" font-weight="normal" font-style="italic" font-family='"Liberation Serif", serif' fill="#6a6a6a" textLength="13.84" lengthAdjust="spacingAndGlyphs" stroke="#6a6a6a" stroke-width="0.6">x</text></svg>
<div id="taskbar"></div><svg width="1920" height="1280" style="position:absolute;left:0;top:0"><path d="M16,1253.3 L22.8,1252.3 V1259.2 H16 Z M23.8,1252.2 L32,1251 V1259.2 H23.8 Z M16,1260.2 H22.8 V1267 L16,1266 Z M23.8,1260.2 H32 V1268.3 L23.8,1267.1 Z" fill="#ffffff"/><rect x="1916.5" y="1240" width="3.5" height="40" fill="#1e1e1e"/><rect x="0" y="1277.5" width="1920" height="2.5" fill="#242424"/><rect x="1914.8" y="1240" width="1.5" height="40" fill="#7a7a7a"/></svg>
<!--TASKBAR-->
</body></html>
